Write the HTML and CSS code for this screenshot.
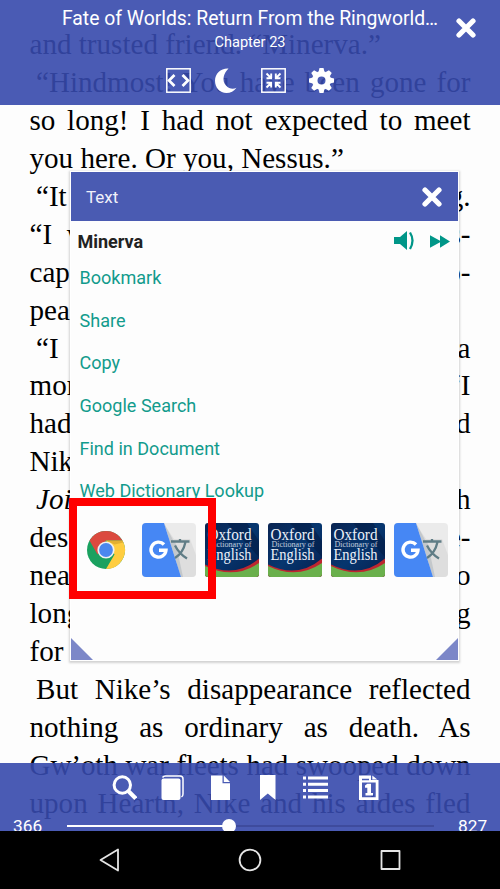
FILE: index.html
```html
<!DOCTYPE html>
<html lang="en">
<head>
<meta charset="utf-8">
<title>Reader</title>
<link rel="stylesheet" href="styles.css">
</head>
<body>
<div class="screen">
  <main class="page">
    <p class="line natural">and trusted friend. “Minerva.”</p>
    <p class="line indent">“Hindmost! You have been gone for</p>
    <p class="line">so long! I had not expected to meet</p>
    <p class="line natural">you here. Or you, Nessus.”</p>
    <p class="line indent split"><span>“It</span><span>g.</span></p>
    <p class="line split"><span>“I&ensp;w</span><span>s-</span></p>
    <p class="line split"><span>cap</span><span>o-</span></p>
    <p class="line">pea</p>
    <p class="line indent split"><span>“I</span><span>a</span></p>
    <p class="line split"><span>mor</span><span>“I</span></p>
    <p class="line split"><span>had</span><span>d</span></p>
    <p class="line">Nik</p>
    <p class="line indent split"><i>Joi</i><span>h</span></p>
    <p class="line split"><span>des</span><span>e-</span></p>
    <p class="line split"><span>nea</span><span>o</span></p>
    <p class="line split"><span>long</span><span>g</span></p>
    <p class="line natural">for</p>
    <p class="line indent">But Nike’s disappearance reflected</p>
    <p class="line">nothing as ordinary as death. As</p>
    <p class="line tight">Gw’oth war fleets had swooped down</p>
    <p class="line">upon Hearth, Nike and his aides fled</p>
  </main>

  <header class="topbar">
    <div class="title">Fate of Worlds: Return From the Ringworld…</div>
    <div class="chapter">Chapter 23</div>
    <svg class="close" viewBox="0 0 20 20"><path d="M3 3l14 14M17 3l-14 14"/></svg>
    <div class="tools">
      <svg viewBox="0 0 25 25"><rect x=".8" y=".8" width="23.4" height="23.4" fill="none" stroke="#fff" stroke-width="1.5"/><path d="M8.500 7L3 12.500 8.500 18M16.500 7l5.500 5.500-5.500 5.500" fill="none" stroke="#fff" stroke-width="2.700"/></svg>
      <svg viewBox="0 0 25 25"><path fill="#fff" d="M14.500.5C9.500 5.500 7.500 12.500 12 17.500c3 3.300 7 4 10.500 2.300C20 23.300 16.500 25 12.500 25 5.800 25 1 19.500 1 12.700 1 5.500 7 0 14.500.5z"/></svg>
      <svg viewBox="0 0 25 25"><rect x=".8" y=".8" width="23.4" height="23.4" fill="none" stroke="#fff" stroke-width="1.500"/><path d="M5.500 5.500l4 4M10.200 5.500v4.700H5.500M19.500 5.500l-4 4M14.800 5.500v4.700h4.700M5.500 19.500l4-4M5.500 14.800h4.700v4.700M19.500 19.500l-4-4M14.800 19.500v-4.700h4.700" fill="none" stroke="#fff" stroke-width="1.900"/></svg>
      <svg viewBox="-12.500 -12.500 25 25"><g fill="#fff"><path fill-rule="evenodd" d="M-9.500 0a9.500 9.500 0 1 0 19 0a9.500 9.500 0 1 0-19 0zM-4 0a4 4 0 1 1 8 0a4 4 0 1 1-8 0z"/><path id="tooth" d="M-3-8.500l1-4h4l1 4z"/><use href="#tooth" transform="rotate(45)"/><use href="#tooth" transform="rotate(90)"/><use href="#tooth" transform="rotate(135)"/><use href="#tooth" transform="rotate(180)"/><use href="#tooth" transform="rotate(225)"/><use href="#tooth" transform="rotate(270)"/><use href="#tooth" transform="rotate(315)"/></g></svg>
    </div>
  </header>

  <section class="popup">
    <div class="popup-head">
      <span>Text</span>
      <svg class="x" viewBox="0 0 20 20"><path d="M3 3l14 14M17 3l-14 14"/></svg>
    </div>
    <div class="word">
      <b>Minerva</b>
      <svg class="speaker" viewBox="0 0 21 20"><path fill="#009688" d="M0 6h6l7-6v19l-7-6H0z"/><path d="M16 1.500q5 8 0 16.500" fill="none" stroke="#009688" stroke-width="2.300"/></svg>
      <svg class="forward" viewBox="0 0 21 13"><path fill="#009688" d="M0 0l10.500 5.600V0L21 6.500 10.500 13V7.400L0 13z"/></svg>
    </div>
    <ul class="menu">
      <li>Bookmark</li>
      <li>Share</li>
      <li>Copy</li>
      <li>Google Search</li>
      <li>Find in Document</li>
      <li>Web Dictionary Lookup</li>
    </ul>
    <div class="apps">
      <svg class="app chrome" viewBox="0 0 54 54">
        <circle cx="18" cy="27" r="19" fill="#1aa15f"/>
        <path fill="#db4a3f" d="M1.500 17.500A19 19 0 0 1 34.500 17.500H18l-8.500 14z"/>
        <path fill="#ffcd40" d="M34.500 17.500A19 19 0 0 1 18 46l8.500-14.500L18 17.500z"/>
        <path d="M18 17.500h16.500l1 2-9 2z" fill="#a06d18" opacity=".3"/>
        <circle cx="18" cy="27" r="8.600" fill="#f1f1f1"/><circle cx="18" cy="27" r="6.900" fill="#4b87ee"/>
      </svg>
      <svg class="app" viewBox="0 0 54 54">
        <defs><g id="translate">
          <rect width="54" height="54" rx="4" fill="#ebebeb"/>
          <path d="M24 4l8 12 16 0 6 16v18a4 4 0 0 1-4 4H39z" fill="#dedede"/>
          <path d="M22 0l9 17 3 4 7 33h-2z" fill="#c4c8cb"/>
          <path d="M4 0h18l17 54H4a4 4 0 0 1-4-4V4a4 4 0 0 1 4-4z" fill="#4687f4"/>
          <path d="M22 21.500a7.500 7.500 0 1 0 2 5.700h-7" fill="none" stroke="#fff" stroke-width="3.400"/>
          <path d="M29 18.500h18.500M38 16v3M43.500 19c-1.500 7-5 12.500-10.500 16M33 22.500c2.500 5 7 10 12 13" fill="none" stroke="#607d86" stroke-width="2.300"/>
        </g></defs>
        <use href="#translate"/>
      </svg>
      <svg class="app" viewBox="0 0 54 54">
        <defs>
          <clipPath id="tile"><rect width="54" height="54" rx="3"/></clipPath>
          <linearGradient id="navy" x2="1" y2="1"><stop stop-color="#0a2452"/><stop offset=".5" stop-color="#06366f"/><stop offset="1" stop-color="#061f4e"/></linearGradient>
          <g id="oxford" clip-path="url(#tile)">
            <rect width="54" height="54" fill="url(#navy)"/>
            <path d="M22 0h20L54 18V34z" fill="#041b43" opacity=".55"/>
            <path d="M0 41.500Q30 56 54 35.500V54H0z" fill="#bd2630"/>
            <path d="M0 43Q29 57 54 40V54H0z" fill="#6ab04c"/>
            <text class="ox" x="2.500" y="16.500" textLength="44" lengthAdjust="spacingAndGlyphs" font-size="17">Oxford</text>
            <text class="ox" x="3.500" y="24" textLength="43" lengthAdjust="spacingAndGlyphs" font-size="8" opacity=".8">Dictionary of</text>
            <text class="ox" x="2.500" y="36.500" textLength="44" lengthAdjust="spacingAndGlyphs" font-size="16">English</text>
          </g>
        </defs>
        <use href="#oxford"/>
      </svg>
      <svg class="app" viewBox="0 0 54 54"><use href="#oxford"/></svg>
      <svg class="app" viewBox="0 0 54 54"><use href="#oxford"/></svg>
      <svg class="app" viewBox="0 0 54 54"><use href="#translate"/></svg>
    </div>
    <i class="grip left"></i>
    <i class="grip right"></i>
  </section>

  <div class="highlight"></div>

  <footer class="bottombar">
    <div class="actions">
      <svg viewBox="0 0 25 25"><circle cx="10.300" cy="10" r="8.200" fill="none" stroke="#fff" stroke-width="3"/><path d="M16.300 16l7.500 7.500" stroke="#fff" stroke-width="4.200"/></svg>
      <svg viewBox="0 0 25 25"><rect x="1.500" y="3.500" width="19" height="21.500" rx="2" fill="#fff"/><path d="M2.500 2.500Q3.500 1 5.500 1H20q3 0 3 3v15q0 2-1.500 3" fill="none" stroke="#fff" stroke-width="1.500"/></svg>
      <svg viewBox="0 0 25 25"><path fill="#fff" d="M3 .5h11.500v7.800H22V25H3zM15.800.5L22 7H15.800z"/></svg>
      <svg viewBox="0 0 25 25"><path fill="#fff" d="M5 0h15.500v25l-7.700-6.500L5 25z"/></svg>
      <svg viewBox="0 0 25 25"><path d="M0 3h3M5 3h20M0 9.300h3M5 9.300h20M0 15.600h3M5 15.600h20M0 22h3M5 22h20" stroke="#fff" stroke-width="3"/></svg>
      <svg class="goto" viewBox="0 0 25 25"><path fill="#fff" fill-rule="evenodd" d="M3 .5h12V5h7.500v20H3zM6 7.500v14.700h13.700V7.500zM6 3.700v1.500h7V3.700zM16.300.5l5 4h-5z"/><path fill="#fff" d="M11.300 8.700h3.700v9.300h2v2.500h-7.500V18h1.800v-5.300H9v-2.200z"/></svg>
    </div>
    <div class="progress">
      <span class="num">366</span>
      <div class="track"><div class="played"></div><div class="knob"></div></div>
      <span class="num">827</span>
    </div>
  </footer>

  <nav class="sysnav">
    <svg viewBox="0 0 24 24"><path d="M21 1.500v21L3.500 12z"/></svg>
    <svg viewBox="0 0 24 24"><circle cx="12" cy="12" r="10.400"/></svg>
    <svg viewBox="0 0 24 24"><rect x="3.500" y="3" width="18" height="18"/></svg>
  </nav>
</div>
</body>
</html>
```
FILE: styles.css
```css
* { box-sizing: border-box; }
body { margin: 0; background: #fdfdfd; }
svg { display: block; flex: none; }
.screen {
  position: relative;
  width: 500px;
  height: 889px;
  overflow: hidden;
  font-family: Roboto, "Liberation Sans", sans-serif;
}
.page {
  height: 889px;
  padding: 26.200px 29.500px 0;
  overflow: hidden;
  font: 29.100px/37.930px "Liberation Serif", serif;
  color: #000;
}
.line {
  margin: 0;
  height: 37.930px;
  white-space: nowrap;
  text-align-last: justify;
}
.natural { text-align-last: left; }
.tight { letter-spacing: -.1px; }
.indent { padding-left: 6.500px; }
.split { display: flex; justify-content: space-between; }
.topbar {
  position: absolute;
  inset: 0 0 auto;
  height: 104.500px;
  background: rgba(54, 73, 172, .9);
  color: #fff;
  text-align: center;
}
.title { padding-top: 8px; font-size: 19.350px; line-height: 22px; white-space: nowrap; }
.chapter { margin-top: 4px; font-size: 14.600px; line-height: 16px; }
.close { position: absolute; left: 456px; top: 18px; width: 20px; height: 20px; }
.close path, .x path { stroke: #fff; stroke-width: 5.200; stroke-linecap: round; }
.tools { display: flex; gap: 22.700px; padding: 18px 0 0 166px; }
.tools svg, .actions svg { width: 25px; height: 25px; }
.popup {
  position: absolute;
  left: 70px;
  top: 171px;
  width: 389px;
  height: 490px;
  border: 1px solid #fff;
  background: #fdfdfd;
  box-shadow: 0 1px 2px 1px rgba(0, 0, 0, .17);
}
.popup-head {
  display: flex;
  align-items: center;
  justify-content: space-between;
  height: 49px;
  padding: 0 16px 0 15px;
  background: #4a5bb2;
  color: #f0f1fa;
  font-size: 17px;
}
.x { width: 20px; height: 20px; }
.word { display: flex; align-items: center; height: 40px; padding: 0 8px 0 6.500px; font-size: 18px; color: #222; }
.word b { margin-right: auto; }
.speaker { width: 21px; height: 20px; margin-right: 15px; }
.forward { width: 20px; height: 13px; }
.menu { margin: 0; padding: 0 0 0 8.500px; list-style: none; font-size: 18.050px; color: #129b8c; }
.menu li { height: 42.700px; line-height: 34px; }
.apps { display: flex; gap: 9px; padding: 5.800px 0 0 17px; }
.chrome { margin-right: -9px; overflow: visible; }
.app { width: 54px; height: 54px; }
.ox { font-family: "Liberation Serif", serif; fill: #edf1f9; }
.grip { position: absolute; bottom: 0; width: 22px; height: 22px; background: #7c87c8; }
.left { left: 0; clip-path: polygon(0 0, 100% 100%, 0 100%); }
.right { right: 0; clip-path: polygon(100% 0, 100% 100%, 0 100%); }
.highlight { position: absolute; left: 69px; top: 498px; width: 147px; height: 101px; border: 8px solid #f00; }
.bottombar {
  position: absolute;
  left: 0;
  right: 0;
  top: 763px;
  height: 68px;
  overflow: hidden;
  background: rgba(54, 73, 172, .9);
  color: #fff;
}
.actions { display: flex; gap: 22.800px; padding: 11.500px 0 0 112px; }
.goto { margin-left: 5.500px; }
.progress { display: flex; align-items: center; height: 24px; margin-top: 14.500px; padding: 0 12px 0 13px; }
.num { width: 30px; font-size: 17.300px; line-height: 24px; }
.track { position: relative; width: 367px; height: 2px; margin: 0 auto 0 24px; background: #3e4b9d; }
.played { width: 162px; height: 2px; background: #fff; }
.knob { position: absolute; left: 155px; top: -6px; width: 14px; height: 14px; border-radius: 50%; background: #fff; }
.sysnav {
  position: absolute;
  inset: 830.500px 0 0;
  display: flex;
  align-items: center;
  gap: 116.500px;
  padding-left: 97px;
  background: #000;
}
.sysnav svg { width: 24px; height: 24px; fill: none; stroke: #e5e5e5; stroke-width: 1.800; stroke-linejoin: round; }
```
